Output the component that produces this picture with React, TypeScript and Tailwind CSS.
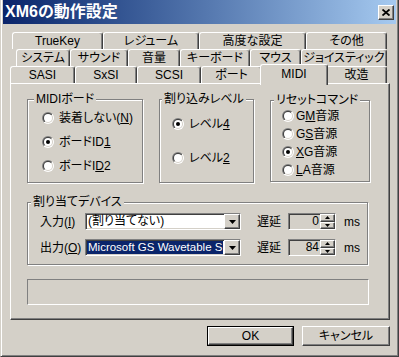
import { useId, type ReactNode } from 'react';

const raised =
  'border border-t-white border-l-white border-r-[#404040] border-b-[#404040] shadow-[inset_-1px_-1px_#808080]';
const sunken =
  'border border-t-[#808080] border-l-[#808080] border-r-white border-b-white shadow-[inset_1px_1px_#404040,inset_-1px_-1px_#d4d0c8]';

const rows: [string, string][][] = [
  [
    ['TrueKey', 'w-[91px]'],
    ['レジューム', 'w-[96px]'],
    ['高度な設定', 'w-[107px]'],
    ['その他', 'w-[81px]'],
  ],
  [
    ['システム', 'w-[54px]'],
    ['サウンド', 'w-[58px]'],
    ['音量', 'w-[52px]'],
    ['キーボード', 'w-[70px]'],
    ['マウス', 'w-[51px]'],
    ['ジョイスティック', 'w-[86px]'],
  ],
];

function Tab({ label, w }: { label: string; w: string }) {
  return (
    <div
      className={`${w} h-[17px] flex items-center justify-center border-l border-t border-r border-l-white border-t-white border-r-[#404040] shadow-[inset_-1px_0_#808080] rounded-t-[3px]`}
    >
      {label}
    </div>
  );
}

function Radio({ checked, children }: { checked?: boolean; children: ReactNode }) {
  const id = useId();
  return (
    <div className="flex items-center">
      <svg width="12" height="12" viewBox="0 0 12 12" className="shrink-0">
        <defs>
          <linearGradient id={`${id}a`} x1="0" y1="0" x2="1" y2="1">
            <stop offset="0.5" stopColor="#808080" />
            <stop offset="0.5" stopColor="#ffffff" />
          </linearGradient>
          <linearGradient id={`${id}b`} x1="0" y1="0" x2="1" y2="1">
            <stop offset="0.5" stopColor="#404040" />
            <stop offset="0.5" stopColor="#d4d0c8" />
          </linearGradient>
        </defs>
        <circle cx="6" cy="6" r="6" fill={`url(#${id}a)`} />
        <circle cx="6" cy="6" r="5" fill={`url(#${id}b)`} />
        <circle cx="6" cy="6" r="4" fill="#ffffff" />
        {checked && <circle cx="6" cy="6" r="2" fill="#000000" />}
      </svg>
      {children}
    </div>
  );
}

function Group({
  caption,
  className,
  capLeft,
  children,
}: {
  caption: string;
  className: string;
  capLeft: string;
  children: ReactNode;
}) {
  return (
    <div className={`relative border border-[#808080] shadow-[inset_1px_1px_#fff,1px_1px_#fff] ${className}`}>
      <span className={`absolute top-[-8px] ${capLeft} px-[2px] bg-[#d4d0c8] leading-[14px]`}>{caption}</span>
      {children}
    </div>
  );
}

function DropButton() {
  return (
    <div className={`w-[16px] h-full shrink-0 flex items-center justify-center bg-[#d4d0c8] ${raised}`}>
      <svg width="7" height="4" viewBox="0 0 7 4">
        <polygon points="0,0 7,0 3.5,4" fill="#000" />
      </svg>
    </div>
  );
}

function Spin({ value }: { value: string }) {
  return (
    <div className={`w-[48px] h-[17px] flex bg-[#d4d0c8] ${sunken}`}>
      <div className="flex-1 text-right pr-[1px] leading-[15px]">{value}</div>
      <div className="w-[15px] flex flex-col">
        <div className={`h-1/2 flex items-center justify-center ${raised}`}>
          <svg width="5" height="3" viewBox="0 0 5 3">
            <polygon points="2.5,0 5,3 0,3" fill="#000" />
          </svg>
        </div>
        <div className={`h-1/2 flex items-center justify-center ${raised}`}>
          <svg width="5" height="3" viewBox="0 0 5 3">
            <polygon points="0,0 5,0 2.5,3" fill="#000" />
          </svg>
        </div>
      </div>
    </div>
  );
}

export default function App() {
  return (
    <div className="w-[399px] h-[357px] bg-[#d4d0c8] flex flex-col text-[12px] text-black font-['Liberation_Sans','Noto_Sans_CJK_JP',sans-serif] [font-feature-settings:'palt'] leading-[14px] border-l border-r border-b border-l-[#d4d0c8] border-r-[#404040] border-b-[#404040] shadow-[inset_1px_0_#fff,inset_-1px_-1px_#808080] overflow-hidden select-none">
      {/* title bar */}
      <div className="mx-[2px] h-[24px] shrink-0 flex items-center pl-[2px] pr-[2px] bg-gradient-to-r from-[#0a246a] to-[#a6caf0]">
        <span className="flex-1 text-white font-bold text-[16px] leading-[20px]">XM6の動作設定</span>
        <div className={`w-[16px] h-[15px] flex items-center justify-center bg-[#d4d0c8] ${raised}`}>
          <svg width="8" height="7" viewBox="0 0 8 7">
            <path d="M0.5 0.5 L7.5 6.5 M7.5 0.5 L0.5 6.5" stroke="#000" strokeWidth="1.8" />
          </svg>
        </div>
      </div>

      {/* tabs */}
      <div className="mt-[8px] flex">
        <div className="ml-[11px] flex">
          {rows[0].map(([l, w]) => (
            <Tab key={l} label={l} w={w} />
          ))}
        </div>
      </div>
      <div className="flex">
        <div className="ml-[15px] flex">
          {rows[1].map(([l, w]) => (
            <Tab key={l} label={l} w={w} />
          ))}
        </div>
      </div>
      <div className="flex h-[17px] items-start ml-[9px]">
        <Tab label="SASI" w="w-[65px]" />
        <Tab label="SxSI" w="w-[62px]" />
        <Tab label="SCSI" w="w-[64px]" />
        <Tab label="ポート" w="w-[61px]" />
        <div className="relative z-10 -mx-[2px] -mt-[2px] w-[68px] h-[21px] flex justify-center pt-[2px] bg-[#d4d0c8] border-l border-t border-r border-l-white border-t-white border-r-[#404040] shadow-[inset_-1px_0_#808080] rounded-t-[3px]">
          MIDI
        </div>
        <Tab label="改造" w="w-[61px]" />
      </div>

      {/* panel */}
      <div className="ml-[9px] w-[380px] h-[237px] shrink-0 pl-[16px] pt-[15px] border border-t-white border-l-white border-r-[#404040] border-b-[#404040] shadow-[inset_-1px_-1px_#808080]">
        <div className="flex gap-[16px]">
          <Group caption="MIDIボード" className="w-[116px] h-[84px] pt-[6px] pl-[14px]" capLeft="left-[6px]">
            <div className="h-[24px] flex items-center">
              <Radio>
                <span className="ml-[5px]">
                  装着しない(<u>N</u>)
                </span>
              </Radio>
            </div>
            <div className="h-[24px] flex items-center">
              <Radio checked>
                <span className="ml-[5px]">
                  ボードID<u>1</u>
                </span>
              </Radio>
            </div>
            <div className="h-[24px] flex items-center">
              <Radio>
                <span className="ml-[5px]">
                  ボードI<u>D</u>2
                </span>
              </Radio>
            </div>
          </Group>
          <Group caption="割り込みレベル" className="w-[95px] h-[84px] pt-[7px] pl-[12px]" capLeft="left-[2px]">
            <div className="h-[34px] flex items-center">
              <Radio checked>
                <span className="ml-[5px]">
                  レベル<u>4</u>
                </span>
              </Radio>
            </div>
            <div className="h-[34px] flex items-center">
              <Radio>
                <span className="ml-[5px]">
                  レベル<u>2</u>
                </span>
              </Radio>
            </div>
          </Group>
          <Group caption="リセットコマンド" className="mt-[1px] w-[100px] h-[82px] pt-[6px] pl-[11px]" capLeft="left-[3px]">
            {[
              ['G', 'M', '音源', false],
              ['G', 'S', '音源', false],
              ['', 'X', 'G音源', true],
              ['', 'L', 'A音源', false],
            ].map(([a, u, b, c]) => (
              <div key={`${a}${u}`} className="h-[18px] flex items-center">
                <Radio checked={c as boolean}>
                  <span className="ml-[2px]">
                    {a as string}
                    <u>{u as string}</u>
                    {b as string}
                  </span>
                </Radio>
              </div>
            ))}
          </Group>
        </div>

        <Group caption="割り当てデバイス" className="mt-[19px] w-[341px] h-[63px] pt-[10px] pl-[12px]" capLeft="left-[3px]">
          <div className="h-[17px] flex items-center">
            <div className="w-[45px]">
              入力(<u>I</u>)
            </div>
            <div className={`w-[156px] h-[17px] flex bg-white ${sunken}`}>
              <div className="flex-1 pl-[2px] leading-[15px] overflow-hidden whitespace-nowrap">(割り当てない)</div>
              <DropButton />
            </div>
            <div className="ml-[16px] w-[31px]">遅延</div>
            <Spin value="0" />
            <div className="ml-[8px]">ms</div>
          </div>
          <div className="mt-[9px] h-[17px] flex items-center">
            <div className="w-[45px]">
              出力(<u>O</u>)
            </div>
            <div className={`w-[156px] h-[17px] flex bg-white ${sunken}`}>
              <div className="flex-1 min-w-0 p-[1px] overflow-hidden">
                <div className="h-full bg-[#0a246a] text-white leading-[13px] overflow-hidden whitespace-nowrap pl-[1px] text-[11.5px]">
                  Microsoft GS Wavetable S
                </div>
              </div>
              <DropButton />
            </div>
            <div className="ml-[16px] w-[31px]">遅延</div>
            <Spin value="84" />
            <div className="ml-[8px]">ms</div>
          </div>
        </Group>

        <div className="mt-[14px] w-[342px] h-[26px] border border-t-[#808080] border-l-[#808080] border-r-white border-b-white" />
      </div>

      {/* buttons */}
      <div className="mt-[6px] flex justify-end gap-[8px] pr-[8px]">
        <div className="w-[87px] h-[20px] border border-black">
          <div className={`w-full h-full flex items-center justify-center ${raised}`}>OK</div>
        </div>
        <div className={`w-[88px] h-[20px] flex items-center justify-center ${raised}`}>キャンセル</div>
      </div>
    </div>
  );
}
